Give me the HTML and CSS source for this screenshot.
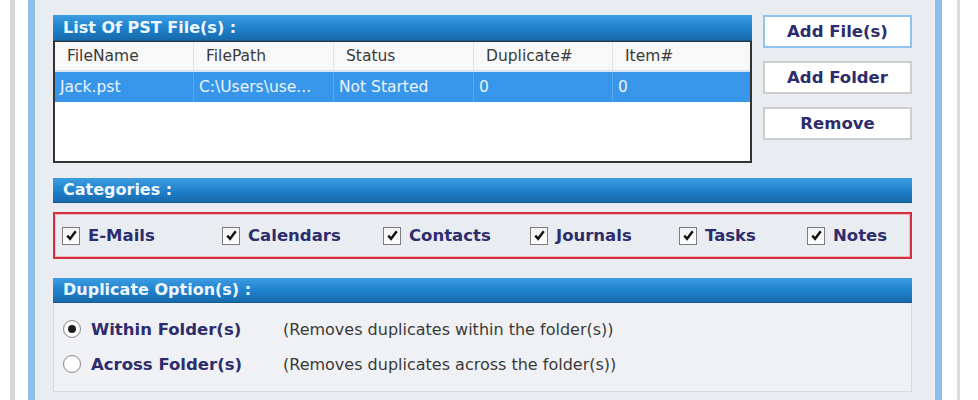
FILE: index.html
```html
<!DOCTYPE html>
<html lang="en">
<head>
  <meta charset="UTF-8" />
  <title>Remove Duplicates</title>
  <link rel="stylesheet" href="styles.css">
</head>
<body>
  <div class="window">
    <div class="panel">

      <div class="top">
        <div class="files">
          <div class="bar">List Of PST File(s) :</div>
          <div class="grid">
            <div class="row head">
              <span>FileName</span>
              <span>FilePath</span>
              <span>Status</span>
              <span>Duplicate#</span>
              <span>Item#</span>
            </div>
            <div class="row selected">
              <span>Jack.pst</span>
              <span>C:\Users\use...</span>
              <span>Not Started</span>
              <span>0</span>
              <span>0</span>
            </div>
          </div>
        </div>

        <div class="buttons">
          <button class="btn active">Add File(s)</button>
          <button class="btn">Add Folder</button>
          <button class="btn">Remove</button>
        </div>
      </div>

      <div class="bar section">Categories :</div>
      <div class="categories">
        <label class="check"><span class="box"><svg viewBox="0 0 16 16"><path d="M3.5 8.2 L6.5 11.5 L12.5 3.5" /></svg></span>E-Mails</label>
        <label class="check"><span class="box"><svg viewBox="0 0 16 16"><path d="M3.5 8.2 L6.5 11.5 L12.5 3.5" /></svg></span>Calendars</label>
        <label class="check"><span class="box"><svg viewBox="0 0 16 16"><path d="M3.5 8.2 L6.5 11.5 L12.5 3.5" /></svg></span>Contacts</label>
        <label class="check"><span class="box"><svg viewBox="0 0 16 16"><path d="M3.5 8.2 L6.5 11.5 L12.5 3.5" /></svg></span>Journals</label>
        <label class="check"><span class="box"><svg viewBox="0 0 16 16"><path d="M3.5 8.2 L6.5 11.5 L12.5 3.5" /></svg></span>Tasks</label>
        <label class="check"><span class="box"><svg viewBox="0 0 16 16"><path d="M3.5 8.2 L6.5 11.5 L12.5 3.5" /></svg></span>Notes</label>
      </div>

      <div class="bar section dup">Duplicate Option(s) :</div>
      <div class="options">
        <div class="option">
          <span class="radio on"></span>
          <strong>Within Folder(s)</strong>
          <span class="hint">(Removes duplicates within the folder(s))</span>
        </div>
        <div class="option">
          <span class="radio"></span>
          <strong>Across Folder(s)</strong>
          <span class="hint">(Removes duplicates across the folder(s))</span>
        </div>
      </div>

    </div>
  </div>
</body>
</html>
```

FILE: styles.css
```css
:root {
  --navy: #2d2c6c;
  --panel: #e9ecf1;
  --frame-blue: #8dbfe9;
  --select: #3896ea;
}

* {
  box-sizing: border-box;
}

body {
  margin: 0;
  background: #fff;
  font-family: "DejaVu Sans", Verdana, sans-serif;
  color: #333;
  height: 400px;
  overflow: hidden;
}

.window {
  margin-left: 10px;
  width: 950px;
  height: 400px;
  border-left: 5px solid #d6d6d6;
  border-right: 3px solid #dcdcdc;
  padding: 0 15px 0 13px;
}

.panel {
  height: 100%;
  background: var(--panel);
  border-left: 7px solid var(--frame-blue);
  border-right: 7px solid var(--frame-blue);
  padding: 15px 23px 0 18px;
}

.top {
  display: flex;
  gap: 11px;
}

.files {
  width: 699px;
}

.bar {
  height: 26px;
  padding-left: 10px;
  line-height: 26px;
  font-size: 16px;
  font-weight: bold;
  color: #eef6ff;
  background: linear-gradient(#3c9de2, #1f80cb 55%, #176aab);
  border-bottom: 1px solid #145a90;
}

.grid {
  height: 122px;
  background: #fff;
  border: 2px solid #333;
  border-top-width: 1px;
}

.row {
  display: grid;
  grid-template-columns: 138px 140px 140px 139px 1fr;
  font-size: 15.5px;
}

.row span {
  white-space: nowrap;
  overflow: hidden;
}

.head {
  height: 29px;
  line-height: 28px;
  color: #3a3a3a;
  background: #f8f8f8;
  border-bottom: 1px solid #e2e2e2;
}

.head span {
  padding-left: 12px;
  border-left: 1px solid #e4e4e4;
}

.head span:first-child {
  border-left: none;
}

.selected {
  height: 31px;
  line-height: 31px;
  color: #eaf4ff;
  background: var(--select);
  border-top: 1px solid #cfe6fb;
}

.selected span {
  padding-left: 5px;
  border-left: 1px solid #5aa8ee;
}

.selected span:first-child {
  border-left: none;
  padding-left: 5px;
}

.buttons {
  width: 149px;
  display: flex;
  flex-direction: column;
  gap: 13px;
}

.btn {
  height: 33px;
  background: #fff;
  border: 2px solid #cdcdcd;
  font-family: inherit;
  font-size: 16.5px;
  font-weight: bold;
  color: var(--navy);
  cursor: pointer;
}

.btn.active {
  border-color: #8fc2ec;
}

.section {
  margin-top: 15px;
  height: 25px;
  line-height: 24px;
}

.categories {
  margin-top: 9px;
  height: 47px;
  border: 2px solid #d3303f;
  box-shadow: inset 0 0 0 1px #f3b7bf;
  display: grid;
  grid-template-columns: 160px 161px 147px 149px 128px auto;
  align-items: center;
  padding: 0 0 0 7px;
}

.check {
  display: flex;
  align-items: center;
  gap: 8px;
  font-size: 16.5px;
  font-weight: bold;
  color: var(--navy);
}

.box {
  width: 18px;
  height: 18px;
  border: 1px solid #7c7c7c;
  background: linear-gradient(#f2f2f2, #fff);
  display: flex;
  align-items: center;
  justify-content: center;
}

.box svg {
  width: 15px;
  height: 15px;
  fill: none;
  stroke: #111;
  stroke-width: 2.6;
}

.dup {
  margin-top: 19px;
}

.options {
  height: 89px;
  background: #eff1f4;
  border: 1px solid #d8dade;
  border-top: none;
  padding: 15px 0 0 9px;
  display: flex;
  flex-direction: column;
  gap: 13px;
}

.option {
  display: flex;
  align-items: center;
  height: 22px;
}

.option strong {
  width: 192px;
  margin-left: 10px;
  font-size: 16.5px;
  color: var(--navy);
}

.hint {
  font-size: 16px;
  color: #3a3a3a;
}

.radio {
  width: 18px;
  height: 18px;
  border-radius: 50%;
  border: 1px solid #8a8a8a;
  background: radial-gradient(circle, #fff 55%, #e3e3e3);
  display: flex;
  align-items: center;
  justify-content: center;
}

.radio.on::after {
  content: "";
  width: 8px;
  height: 8px;
  border-radius: 50%;
  background: #1e1e1e;
}
```
